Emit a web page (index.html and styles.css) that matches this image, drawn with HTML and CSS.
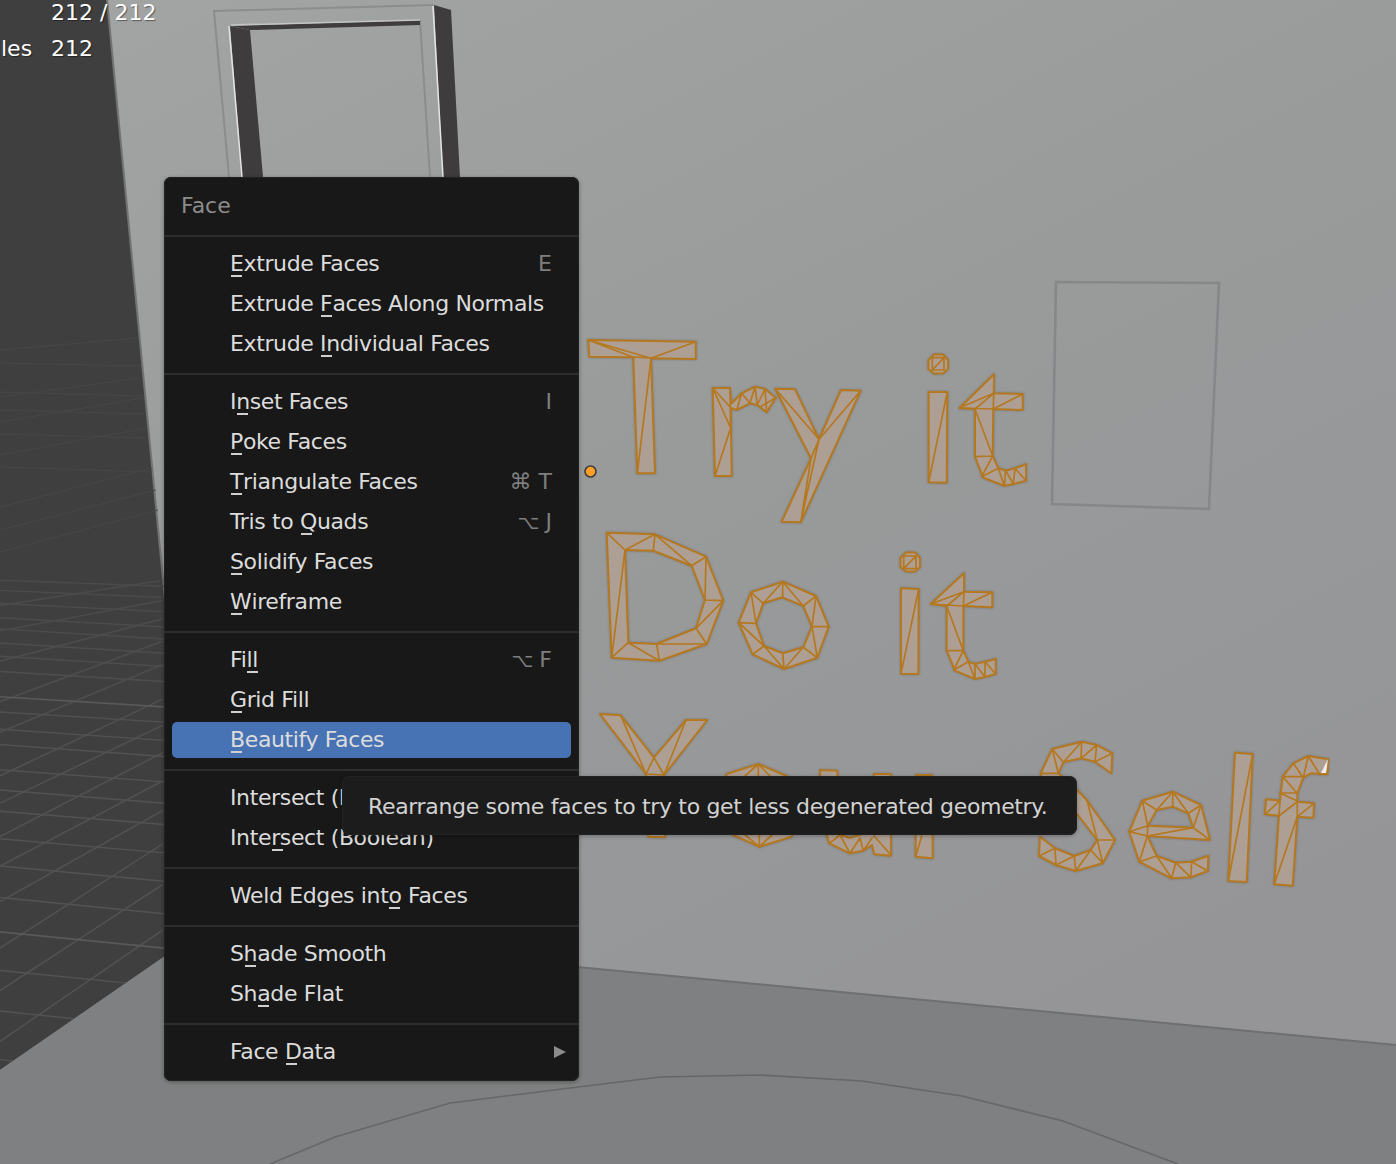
FILE: index.html
```html
<!DOCTYPE html>
<html lang="en">
<head>
<meta charset="utf-8">
<title>Face menu</title>
<link rel="stylesheet" href="styles.css">
</head>
<body>
<main class="viewport">
  <svg class="scene" width="1396" height="1164" viewBox="0 0 1396 1164" aria-hidden="true">
    <defs>
      <linearGradient id="wall" x1="0" y1="0" x2="0.6" y2="1">
        <stop offset="0" stop-color="#a3a5a5"/>
        <stop offset="0.5" stop-color="#999b9b"/>
        <stop offset="1" stop-color="#959597"/>
      </linearGradient>
      <linearGradient id="gridfade" gradientUnits="userSpaceOnUse" x1="0" y1="500" x2="0" y2="760">
        <stop offset="0" stop-color="#464646"/>
        <stop offset="1" stop-color="#525252"/>
      </linearGradient>
    </defs>
    <rect width="1396" height="1164" fill="url(#wall)"/>

    <!-- floor -->
    <path class="floor" d="M0 1070L164 957L577 967L1396 1045V1164H0Z"/>
    <path class="floor-edge" d="M577 967L1396 1045"/>
    <path class="rug" d="M270 1164L335 1137L450 1103L570 1088L660 1077L760 1075L862 1081L962 1096L1063 1121L1178 1164"/>

    <!-- dark grid plane -->
    <path class="plane" d="M0 0H107L165 600V956L0 1070Z"/>
    <path class="plane-edge" d="M107 0L165 600"/>
    <path class="grid-faint" d="M0 363L140 366M0 392L144 396M0 410L146 414M0 434L148 438M0 467L152 472M0 350L138 338M0 397L140 378M0 422L143 398M0 455L147 428M0 507L152 468M0 530L156 490M0 552L158 510"/>
    <g transform="translate(0 -7.6) scale(1 1.0135)">
      <path class="grid" d="M0 580L164 586M0 590L164 597M0 603L164 611M0 617L164 626M0 628L164 638M0 642L164 652M0 655L164 665M0 670L164 680M0 710L164 720M0 727L164 738M0 742L164 754M0 767L164 779M0 787L164 800M0 808L164 821M0 835L164 849M0 862L164 877M0 893L164 909M0 965L164 981M0 1005L164 1022M0 1053L164 1072"/>
      <path class="grid" d="M0 1035L163 925M0 985L163 880M0 943L163 840M0 897L163 807M0 862L163 778M0 833L163 750M0 800L163 723M0 773L163 697M0 730L163 663M0 700L163 640M0 660L163 618M0 630L163 600M0 605L163 580"/>
      <path class="grid-major" d="M0 695L164 705M0 927L164 943"/>
    </g>
    <path class="plane-cover" d="M0 1070L164 957V1164H0Z"/>

    <!-- window frame, top -->
    <path class="frame-line" d="M229 177L214 11L433 5M420 20L430 177"/>
    <path class="frame-dark" d="M230 26L250 30L263 177H242Z"/>
    <path class="frame-dark" d="M434 5L451 10L460 177H443Z"/>
    <path class="frame-dark" d="M231 26L420 20V25L250 30Z"/>
    <path class="frame-light" d="M229 26L242 177M433 6L443 177"/>
    <path class="frame-soft" d="M231 25L420 20"/>

    <!-- window frame, right -->
    <path class="frame-flat" d="M1056 282L1219 283L1209 509L1052 504Z"/>

    <circle class="origin" cx="590.5" cy="471.5" r="5.5"/>

    <g class="mesh">
    <!-- Try -->
    <path class="face" d="M588.3 340L695.7 341.7V359L651 358.3L655 473.3H637.3L633.3 357.3L589.3 356.7Z"/>
    <path class="edge" d="M588.3 340L651 358.3M588.3 340L633.3 357.3M651 358.3L695.7 341.7M633 357L651 358M651 358.3L637.3 473.3"/>
    <path class="face" d="M712.7 388H730L731 404L741.7 393.3L755 386.7L765 389L775.7 397.7L766.7 412.3L757.3 405L750 403.3L736.7 410L730.7 408L731.7 476H715Z"/>
    <path class="edge" d="M712.7 388L730.7 428M712.7 388L731 408M730 388L730.7 428L715 476M736.7 410L741.7 393.3L750 403.3L755 386.7L757.3 405L765 389L766.7 412.3M760 407L775.7 397.7"/>
    <path class="face" d="M775.3 388.7L795 389.3L819 439.3L841 390L860.7 390.7L800.7 522.3L781.7 521.7L811 458.3Z"/>
    <path class="edge" d="M775.3 388.7L819 439.3L860.7 390.7M819 439.3L800.7 522.3M819 439.3L811 458.3L800.7 522.3"/>

    <!-- it -->
    <path class="face" d="M934 354.5H943L948 360V369L943 373.5H934L928.5 369V360Z"/>
    <path class="edge" d="M932.3 357.7H944V370H932.3ZM932.3 370L944 357.7"/>
    <path class="face" d="M928.7 392H947.3L946.7 482.7L928.7 482.3Z"/>
    <path class="edge" d="M947.3 392L928.7 482.3"/>
    <path class="face" d="M994 374.3L993.7 393.3L1022.7 394V410L993.3 409L992.7 456L998.3 468.3L1005.7 470.7L1015 468.3L1026 464.3V480.7L1013.3 484L1004.3 485.7L983.3 477.7L975 456.7V409L959.3 408.3Z"/>
    <path class="edge" d="M959.3 408L993.7 393.3L993.3 409L1022.7 394M975 409L993.7 393.3M959.3 408L993.3 409M975 409L992.7 456L975 456.7M992.7 456L981.7 476.7L998.3 468.3L1004.3 485.7L1005.7 470.7L1013.3 484L1015 468.3L1026 480.7"/>

    <!-- Do -->
    <path class="face" d="M606.7 532.7L655 534.3L706 556.7L723.3 600.7L706.7 644L659.3 660.7L611.7 657.7ZM625 550L628.3 642.7L656.7 644L696 628.3L705 600L691.7 565.7L653.3 550.7Z"/>
    <path class="edge" d="M606.7 532.7L625 550L655 534.3L653.3 550.7M655 534.3L691.7 565.7L706 556.7L705 600L723.3 600.7L696 628.3L706.7 644H656.7L659.3 660.7L628.3 642.7L611.7 657.7L625 550"/>
    <path class="face" d="M782.7 581.7L816 596L828.7 626.7L817.3 657.7L784 669L752.7 654.3L738.7 622.7L751 592.3ZM782.3 597.3L763.3 603.3L756 623.3L764 646L782.7 653.3L803.3 647.3L812 626.7L803.3 606Z"/>
    <path class="edge" d="M782.7 581.7V597.3M782.7 581.7L763.3 603.3M782.7 581.7L803.3 606L816 596L812 626.7L828.7 626.7M812 626.7L817.3 657.7L803.3 647.3L784 669L782.7 653.3M784 669L764 646L752.7 654.3M738.7 622.7L764 646M738.7 622.7L756 623.3L751 592.3L763.3 603.3"/>

    <!-- it -->
    <path class="face" d="M906 552.5H915L920 558V567L915 571.5H906L900.5 567V558Z"/>
    <path class="edge" d="M903.7 556H916V568.7H903.7ZM903.7 568.7L916 556"/>
    <path class="face" d="M901 588.3L918.7 589L918.3 674L901 673.7Z"/>
    <path class="edge" d="M918.7 589L901 673.7"/>
    <path class="face" d="M964 573.3V591.7L992.3 592.3V607.3L963.3 606V650.7L968.3 661.7L975 664L985 661.7L995.7 659V674L985 677L975 679L955 670.7L946.7 650.7V606L930.7 604Z"/>
    <path class="edge" d="M930.7 604L964 591.7L963.3 606L992.3 592.3M930.7 604L963.3 606M946.7 606L964 591.7M946.7 606L963.3 650.7H946.7M963.3 650.7L953.7 670L968.3 661.7L975 679V664L985 677V661.7L995.7 674"/>

    <!-- You -->
    <path class="face" d="M600 714L620.7 715.3L654 757.7L686 720H707.3L664 775L665 837.3L648.3 836.7L646 774Z"/>
    <path class="edge" d="M620.7 715.3L646 774L654 757.7L664 775L686 720M646 774L664 775"/>
    <path class="face" d="M726.7 774L758.3 764L786.7 776L800 800L791.7 836.7L759.3 846.7L733 835L720 805Z"/>
    <path class="edge" d="M758.3 764V776M758.3 764L745 776M758.3 764L770 776M759.3 846.7V835M759.3 846.7L745 835M759.3 846.7L772 835"/>
    <path class="face" d="M820 770L837.3 770.7L840 835L850 838L874 830V774H890.7L891 855.7L874.3 854.3L872 845L863.3 850.7L850 853.3L829.3 843.3L822 820Z"/>
    <path class="edge" d="M829.3 843.3L840 835L850 853.3L860 838L863.3 850.7L872 838M874 836L891 855"/>
    <path class="face" d="M916 775H932L932.7 858.3L915.7 856.7Z"/>
    <path class="edge" d="M915.7 856.7L932 800"/>

    <!-- Self -->
    <path class="face" d="M1052.3 749L1081.7 741.7L1096.7 745L1112.3 753.3L1111.3 773.3L1095 761.7L1081 758.3L1063.3 762.3L1058.3 773.3L1077 790L1086.7 800L1115 840L1102.7 863.3L1075.7 871L1056 865L1039 856L1040 836.7L1055 848.3L1074.3 856L1090.7 850L1097.3 840L1078 815L1045 790L1040.7 773.3Z"/>
    <path class="edge" d="M1052.3 749L1063.3 762.3L1081.7 741.7L1081 758.3L1096.7 745L1095 761.7L1112.3 753.3M1040.7 773.3H1058.3L1052.3 749M1087 800L1097.3 840H1115M1097.3 840L1102.7 863.3L1090.7 850L1075.7 871L1074.3 856L1056 865L1055 848.3L1039 856"/>
    <path class="face" d="M1142.3 800.7L1172.7 791.7L1201 805L1210 840L1147.3 836L1156.7 856L1175.7 862.7L1191.7 861.7L1208.3 855.7L1207.7 871L1190.7 877.3L1171.7 878.3L1139.3 861.7L1129.3 831.7ZM1156.7 810L1147.7 825.7L1193.3 827.7L1188.3 813.3L1172.7 806.7Z"/>
    <path class="edge" d="M1142.3 800.7L1156.7 810L1172.7 791.7V806.7M1172.7 791.7L1188.3 813.3L1201 805L1193.3 827.7L1210 840M1142.3 800.7L1147.7 825.7L1147.3 836L1193.3 827.7M1129.3 831.7L1147.7 825.7M1129.3 831.7L1147.3 836L1139.3 861.7L1156.7 856L1171.7 878.3L1175.7 862.7L1190.7 877.3L1191.7 861.7L1207.7 871"/>
    <path class="face" d="M1235 752.7L1252.7 754L1246.7 882L1228.3 881Z"/>
    <path class="edge" d="M1252.7 754L1228.3 881"/>
    <path class="face" d="M1308.3 756L1328.3 759.3L1327.3 774.3L1310.7 773.3L1303.3 777.7L1297.3 793.3V801.7L1314 803.3L1313.3 817.7L1297.3 816.7L1292.7 885.7L1274.3 884.3L1279 815.7L1265 814.3L1266 799.3L1280 800.7L1282.7 776.7L1293.3 763.3Z"/>
    <path class="edge" d="M1265 814.3L1280 800.7L1279 815.7L1297.3 801.7V816.7L1314 803.3M1280 793H1297.3M1280 793L1297.3 801M1282.7 776.7H1303.3M1282.7 776.7L1297.3 793.3M1293.3 763.3L1303.3 777.7L1308.3 756L1320 775M1297.3 816.7L1274.3 884.3"/>
    <path class="sliver" d="M1328 759L1321 773H1326Z"/>
    </g>
  </svg>

  <div class="stats">
    <div class="stat-row">212 / 212</div>
    <div class="stat-row stat-row-last"><span class="stat-label">les</span>212</div>
  </div>

  <nav class="menu">
    <div class="menu-title">Face</div>
    <div class="sep"></div>
    <div class="row"><span class="label"><span class="mn">E</span>xtrude Faces</span><span class="key">E</span></div>
    <div class="row"><span class="label">Extrude <span class="mn">F</span>aces Along Normals</span></div>
    <div class="row"><span class="label">Extrude <span class="mn">I</span>ndividual Faces</span></div>
    <div class="sep"></div>
    <div class="row"><span class="label">I<span class="mn">n</span>set Faces</span><span class="key">I</span></div>
    <div class="row"><span class="label"><span class="mn">P</span>oke Faces</span></div>
    <div class="row"><span class="label"><span class="mn">T</span>riangulate Faces</span><span class="key">⌘ T</span></div>
    <div class="row"><span class="label">Tris to <span class="mn">Q</span>uads</span><span class="key"><span class="opt">⌥</span> J</span></div>
    <div class="row"><span class="label"><span class="mn">S</span>olidify Faces</span></div>
    <div class="row"><span class="label"><span class="mn">W</span>ireframe</span></div>
    <div class="sep"></div>
    <div class="row"><span class="label">Fi<span class="mn">l</span>l</span><span class="key"><span class="opt">⌥</span> F</span></div>
    <div class="row"><span class="label"><span class="mn">G</span>rid Fill</span></div>
    <div class="row row-active"><span class="label"><span class="mn">B</span>eautify Faces</span></div>
    <div class="sep"></div>
    <div class="row"><span class="label">Intersect (Knife)</span></div>
    <div class="row"><span class="label">Inte<span class="mn">r</span>sect (Boolean)</span></div>
    <div class="sep"></div>
    <div class="row"><span class="label">Weld Edges int<span class="mn">o</span> Faces</span></div>
    <div class="sep"></div>
    <div class="row"><span class="label">S<span class="mn">h</span>ade Smooth</span></div>
    <div class="row"><span class="label">Sh<span class="mn">a</span>de Flat</span></div>
    <div class="sep"></div>
    <div class="row"><span class="label">Face <span class="mn">D</span>ata</span><span class="arrow"></span></div>
  </nav>

  <div class="tooltip">Rearrange some faces to try to get less degenerated geometry.</div>
</main>
</body>
</html>
```
FILE: styles.css
```css
* { box-sizing: border-box; }

html, body { margin: 0; padding: 0; }

body {
  width: 1396px;
  height: 1164px;
  overflow: hidden;
  background: #999b9b;
  font-family: "DejaVu Sans", sans-serif;
  font-size: 22px;
}

.viewport {
  position: relative;
  width: 1396px;
  height: 1164px;
  overflow: hidden;
}

.scene {
  position: absolute;
  inset: 0;
  display: block;
}

.floor { fill: #7f8081; }
.floor-edge { fill: none; stroke: #6e6f70; stroke-width: 2; }
.rug { fill: none; stroke: #666768; stroke-width: 1.6; }
.plane { fill: #3f3f3f; }
.plane-edge { fill: none; stroke: #727373; stroke-width: 2; }
.plane-cover { fill: #7f8081; }
.grid { fill: none; stroke: url(#gridfade); stroke-width: 1.4; }
.grid-major { fill: none; stroke: #595959; stroke-width: 1.6; }
.grid-faint { fill: none; stroke: #474747; stroke-width: 1; }
.frame-line { fill: none; stroke: #8a8d8d; stroke-width: 2; }
.frame-dark { fill: #3f3c3d; }
.frame-light { fill: none; stroke: #e4e4e4; stroke-width: 1.5; }
.frame-soft { fill: none; stroke: #c4c5c5; stroke-width: 1.5; }
.frame-flat { fill: none; stroke: #858888; stroke-width: 2.6; }
.origin { fill: #ff9f2a; stroke: #3d3d3d; stroke-width: 1.6; }

.mesh { filter: drop-shadow(0 0 1px rgba(90, 90, 90, 0.5)); }

.face {
  fill: #ae9f95;
  fill-rule: evenodd;
  stroke: #b5781f;
  stroke-width: 2;
  stroke-linejoin: round;
}

.edge {
  fill: none;
  stroke: #b5781f;
  stroke-width: 1.7;
  stroke-linejoin: round;
  stroke-linecap: round;
}

.sliver { fill: #eeeeee; }

.stats {
  position: absolute;
  left: 0;
  top: -5px;
  padding-left: 51px;
  color: #fff;
  text-shadow: 1px 1px 1px rgba(0, 0, 0, 0.45);
}

.stat-row {
  position: relative;
  height: 36px;
  line-height: 36px;
  white-space: nowrap;
}

.stat-label {
  position: absolute;
  left: -50px;
  top: 0;
}

.menu {
  position: absolute;
  left: 164px;
  top: 177px;
  width: 415px;
  height: 904px;
  background: #181818;
  border-radius: 7px;
  box-shadow: inset 0 0 0 1px #222222, 0 1px 4px rgba(0, 0, 0, 0.35);
  color: #dcdcdc;
}

.menu-title {
  height: 58px;
  padding-left: 17px;
  line-height: 57px;
  color: #8c8c8c;
}

.sep {
  height: 2px;
  margin: 10px 0 6px;
  background: #2d2d2d;
}

.menu-title + .sep { margin-top: 0; }

.row {
  position: relative;
  isolation: isolate;
  display: flex;
  align-items: center;
  justify-content: space-between;
  height: 40px;
  padding: 0 27px 0 66px;
  white-space: nowrap;
}

.label { letter-spacing: -0.37px; }

.row-active::before {
  content: "";
  position: absolute;
  inset: 3px 8px 1px;
  z-index: -1;
  border-radius: 5px;
  background: #4772b3;
}

.mn { position: relative; }

.mn::after {
  content: "";
  position: absolute;
  left: 1px;
  top: 100%;
  width: 11px;
  height: 2px;
  margin-top: -1px;
  background: #d0d0d0;
}

.key { color: #7f7f7f; }

.opt { font-size: 19px; letter-spacing: -1px; }

.arrow {
  width: 0;
  height: 0;
  margin-top: 2px;
  margin-right: -14px;
  border-left: 12px solid #8c8c8c;
  border-top: 6px solid transparent;
  border-bottom: 6px solid transparent;
}

.tooltip {
  position: absolute;
  left: 342px;
  top: 776px;
  width: 735px;
  height: 59px;
  padding-left: 26px;
  line-height: 62px;
  letter-spacing: -0.34px;
  white-space: nowrap;
  background: #1c1c1c;
  border-radius: 8px;
  box-shadow: inset 0 0 0 1px #232323, 0 1px 4px rgba(0, 0, 0, 0.3);
  color: #d2d2d2;
}
```
